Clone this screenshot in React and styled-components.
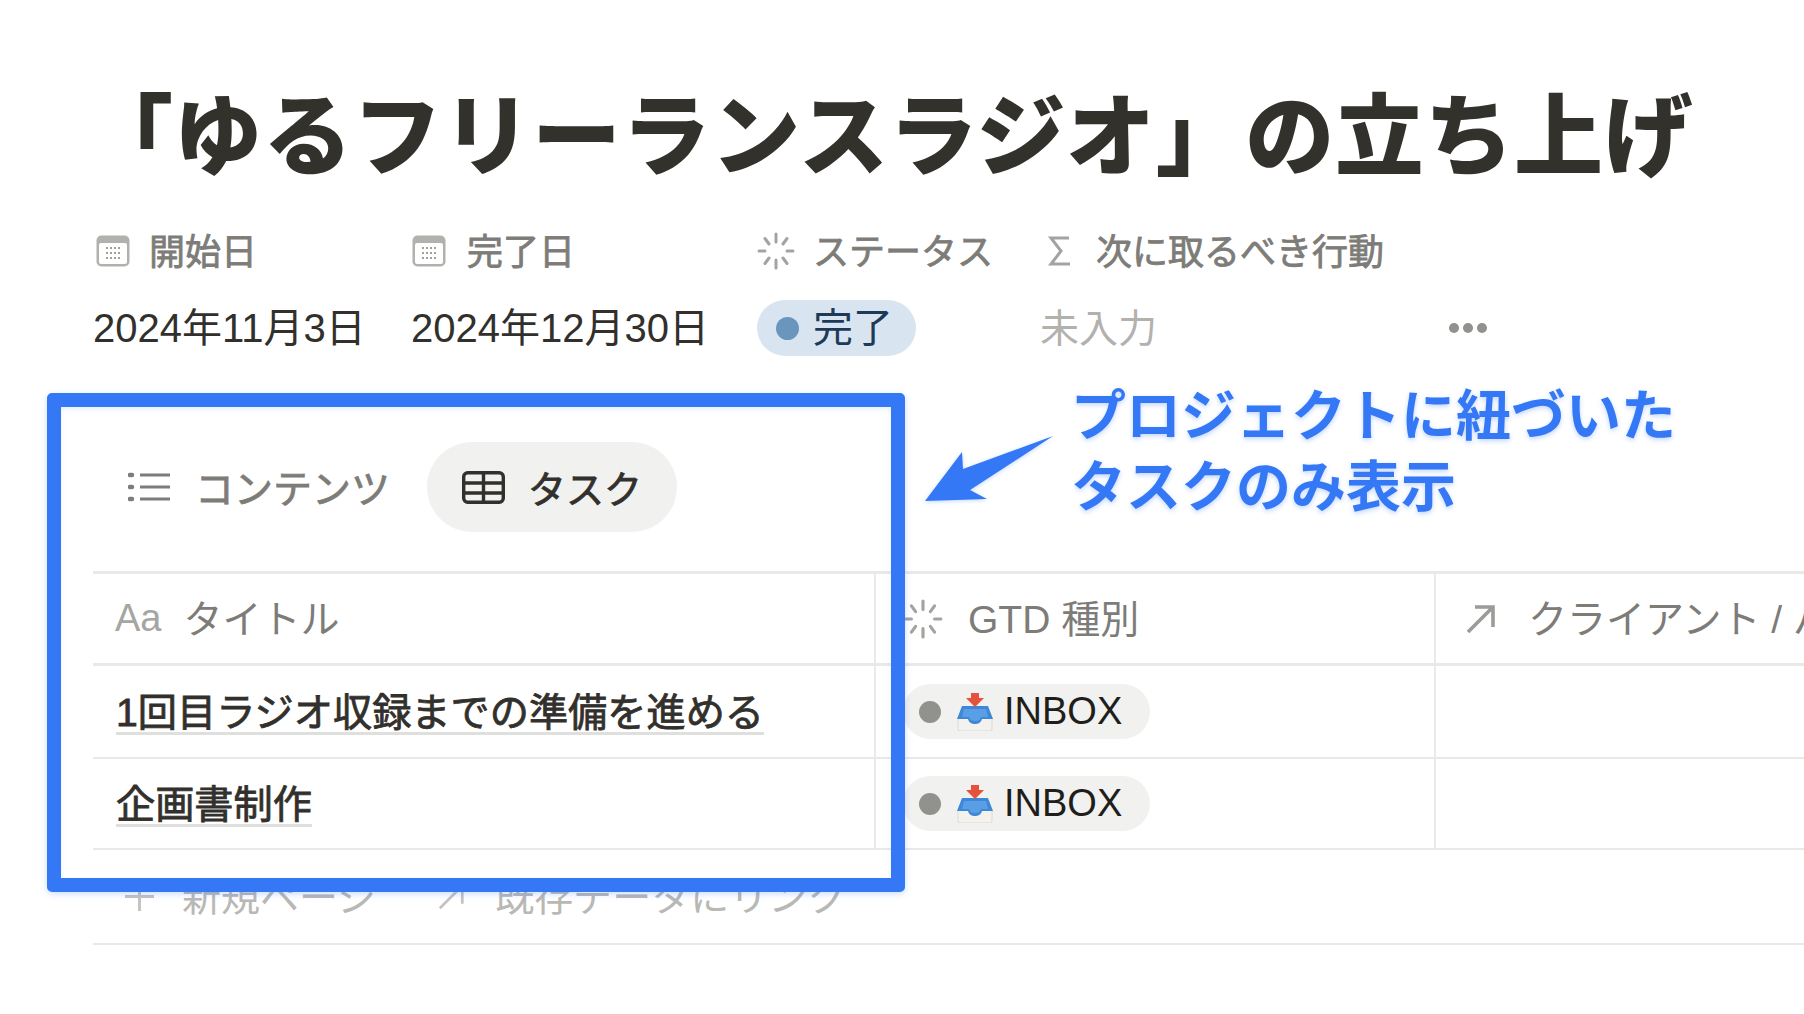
import React from 'react';
import styled, { createGlobalStyle } from 'styled-components';

const GlobalStyle = createGlobalStyle`
  html, body {
    margin: 0;
    padding: 0;
    background: #fff;
  }
  body {
    font-family: "Liberation Sans", "Noto Sans CJK JP", sans-serif;
    color: #37352f;
  }
`;

const Page = styled.div`
  position: relative;
  width: 1804px;
  height: 1014px;
  overflow: hidden;
  box-sizing: border-box;
  padding: 78px 0 0 93px;
`;

const Title = styled.h1`
  margin: 0 0 0 -9px;
  height: 118px;
  font-size: 89px;
  letter-spacing: 0.6px;
  line-height: 118px;
  font-weight: 900;
  white-space: nowrap;
  color: #33312c;
`;

const Props = styled.div`
  display: grid;
  grid-template-columns: 318px 346px 283px 1fr;
  grid-auto-rows: 76px;
  margin-top: 18px;
  align-items: center;
`;

const PropLabel = styled.div`
  display: flex;
  align-items: center;
  gap: ${(p) => p.$gap || 21}px;
  font-size: 36px;
  color: #7d7c78;
  -webkit-text-stroke: 0.8px #7d7c78;
  white-space: nowrap;
  margin-top: -2px;
  svg {
    flex: none;
    margin-left: ${(p) => p.$indent || 0}px;
  }
  span {
    padding-bottom: 5px;
  }
`;

const PropValue = styled.div`
  font-size: ${(p) => (p.$empty ? 39 : 40)}px;
  color: ${(p) => (p.$empty ? '#b2b1ae' : '#32302c')};
  white-space: nowrap;
  display: flex;
  align-items: center;
  justify-content: space-between;
`;

const ValueText = styled.span`
  padding-bottom: 7px;
`;

const More = styled.span`
  display: flex;
  gap: 4px;
  margin-right: 317px;
  i {
    width: 10px;
    height: 10px;
    border-radius: 50%;
    background: #91918e;
  }
`;

const StatusPill = styled.span`
  display: inline-flex;
  align-items: center;
  gap: 14px;
  height: 56px;
  padding: 0 23px 0 19px;
  border-radius: 28px;
  background: #d8e5f0;
  color: #1d3a58;
  font-size: 40px;
  width: max-content;
  box-sizing: border-box;
`;

const StatusDot = styled.i`
  width: 23px;
  height: 23px;
  border-radius: 50%;
  background: #6a96bd;
`;

const Tabs = styled.div`
  display: flex;
  align-items: center;
  height: 90px;
  margin-top: 76px;
  gap: 37px;
  padding-left: 35px;
`;

const Tab = styled.div`
  display: flex;
  align-items: center;
  gap: ${(p) => (p.$active ? 23 : 25)}px;
  height: 90px;
  font-size: ${(p) => (p.$active ? 38 : 39)}px;
  color: ${(p) => (p.$active ? '#32302c' : '#7d7c78')};
  -webkit-text-stroke: 0.8px ${(p) => (p.$active ? '#32302c' : '#7d7c78')};
  background: ${(p) => (p.$active ? '#f1f1f0' : 'transparent')};
  border-radius: 45px;
  padding: ${(p) => (p.$active ? '0 35px' : '0')};
  span {
    padding-bottom: 2px;
  }
`;

const Table = styled.div`
  margin-top: 39px;
  border-top: 3px solid #e9e9e7;
  width: 1800px;
`;

const Row = styled.div`
  display: grid;
  grid-template-columns: 783px 560px 1fr;
  height: ${(p) => p.$h}px;
  border-bottom: ${(p) => p.$bw || 2}px solid #e9e9e7;
  box-sizing: border-box;
`;

const Cell = styled.div`
  display: flex;
  align-items: center;
  overflow: hidden;
  white-space: nowrap;
  box-sizing: border-box;
  border-right: 2px solid #eaeae8;
  padding-left: ${(p) => p.$pl || 0}px;
  gap: ${(p) => p.$gap || 0}px;
  &:last-child {
    border-right: 0;
  }
  svg {
    flex: none;
  }
`;

const HeadText = styled.span`
  font-size: 39px;
  color: #7d7c78;
  padding-bottom: 6px;
`;

const AaMark = styled.span`
  font-size: 38px;
  color: #a5a5a2;
`;

const PageLink = styled.span`
  font-size: 39.2px;
  color: #32302c;
  -webkit-text-stroke: 0.8px #32302c;
  border-bottom: 3px solid #dfdfdd;
  line-height: 38px;
  padding-top: 6px;
`;

const TagPill = styled.span`
  display: flex;
  align-items: center;
  height: 55px;
  padding: 0 28px 0 16px;
  margin-left: 27px;
  border-radius: 28px;
  background: #f1f1ef;
  color: #1f1e1b;
  font-size: 38px;
`;

const TagDot = styled.i`
  width: 22px;
  height: 22px;
  border-radius: 50%;
  background: #91918e;
  margin-right: 15px;
`;

const Footer = styled.div`
  display: flex;
  align-items: center;
  height: 95px;
  padding: 0 0 0 31px;
  border-bottom: 2px solid #e9e9e7;
  box-sizing: border-box;
  width: 1711px;
  color: #b9b8b5;
  font-size: 39px;
`;

const FooterItem = styled.span`
  display: flex;
  align-items: center;
  gap: ${(p) => p.$gap}px;
  margin-right: 62px;
  span {
    padding-bottom: 6px;
  }
`;

const Highlight = styled.div`
  position: absolute;
  left: 47px;
  top: 393px;
  width: 858px;
  height: 499px;
  box-sizing: border-box;
  border: 14px solid #3478f6;
  border-radius: 5px;
  box-shadow: 0 2px 6px rgba(52, 120, 246, 0.25), inset 0 2px 5px rgba(52, 120, 246, 0.12);
  pointer-events: none;
`;

const Callout = styled.div`
  position: absolute;
  left: 1071px;
  top: 381px;
  font-size: 55px;
  line-height: 71px;
  font-weight: 700;
  color: #3478f6;
  text-shadow: 0 2px 5px rgba(52, 120, 246, 0.3);
  white-space: nowrap;
`;

const CalloutArrow = styled.svg`
  position: absolute;
  left: 920px;
  top: 430px;
  filter: drop-shadow(0 1px 2px rgba(52, 120, 246, 0.3));
`;

const Spinner = ({ size = 38, color = '#a3a3a0' }) => (
  <svg width={size} height={size} viewBox="0 0 38 38" fill="none" stroke={color} strokeWidth="3" strokeLinecap="round">
    <path d="M19 2v8M19 28v8M2 19h6M30 19h6M8 6.500l4 5.500M26 26l4 5.500M30 6.500L26 12M12 26l-4 5.500" />
  </svg>
);

const CalendarIcon = () => (
  <svg width="34" height="32" viewBox="0 0 34 32">
    <rect x="0.500" y="0.500" width="33" height="31" rx="5" fill="#b1b1ae" />
    <rect x="3" y="8" width="28" height="21" rx="2" fill="#fff" />
    <g fill="#a0a09d">
      {[11, 15, 19, 23].map((x) => (
        <React.Fragment key={x}>
          <rect x={x - 1} y="12" width="2" height="2" />
          <rect x={x - 1} y="17" width="2" height="2" />
          <rect x={x - 1} y="22" width="2" height="2" />
        </React.Fragment>
      ))}
    </g>
  </svg>
);

const SigmaIcon = () => (
  <svg width="26" height="32" viewBox="0 0 26 32" fill="none" stroke="#a3a3a0" strokeWidth="3" strokeLinejoin="miter">
    <path d="M22 3H4l10 13L4 29h19" />
  </svg>
);

const ListIcon = () => (
  <svg width="42" height="30" viewBox="0 0 42 30" fill="none" stroke="#7d7c78" strokeWidth="3">
    <path d="M12 3h30M12 15h30M12 27h30" />
    <path d="M2 3h2M2 15h2M2 27h2" strokeWidth="4.500" strokeLinecap="round" />
  </svg>
);

const TableIcon = () => (
  <svg width="43" height="33" viewBox="0 0 43 33" fill="none" stroke="#32302c" strokeWidth="3.400">
    <rect x="1.700" y="1.700" width="39.600" height="29.600" rx="4" />
    <path d="M1.700 12h39.600M1.700 22h39.600M21.500 1.700v29.600" />
  </svg>
);

const ArrowIcon = ({ size = 30, color = '#9b9b98', width = 3.600 }) => (
  <svg width={size} height={size} viewBox="0 0 30 30" fill="none" stroke={color} strokeWidth={width}>
    <path d="M2 28L27 3M9 3h18v20" />
  </svg>
);

const PlusIcon = () => (
  <svg width="31" height="31" viewBox="0 0 31 31" fill="none" stroke="#c4c3c0" strokeWidth="3">
    <path d="M15.500 1v29M1 15.500h29" />
  </svg>
);

const InboxEmoji = () => (
  <svg width="38" height="38" viewBox="0 0 38 38" style={{ marginRight: 10 }}>
    <path d="M2 25h34v11a2 2 0 0 1-2 2H4a2 2 0 0 1-2-2z" fill="#f4f2ee" stroke="#dcd9d3" strokeWidth="1" />
    <path d="M6 13h26l5 13H26c-1 4-4 5-7 5s-6-1-7-5H1z" fill="#3f88d8" />
    <path d="M8 16h22l2 8H25c-1 3-3 4-6 4s-5-1-6-4H6z" fill="#5a9fe6" />
    <path d="M15 0h8v5h5l-9 9-9-9h5z" fill="#e5533d" />
  </svg>
);

const InboxTag = () => (
  <TagPill>
    <TagDot />
    <InboxEmoji />
    INBOX
  </TagPill>
);

const App = () => (
  <Page>
    <GlobalStyle />
    <Title>「ゆるフリーランスラジオ」の立ち上げ</Title>

    <Props>
      <PropLabel $indent={3} $gap={19}><CalendarIcon /><span>開始日</span></PropLabel>
      <PropLabel $indent={1}><CalendarIcon /><span>完了日</span></PropLabel>
      <PropLabel $gap={18}><Spinner /><span>ステータス</span></PropLabel>
      <PropLabel $gap={23} $indent={7}><SigmaIcon /><span>次に取るべき行動</span></PropLabel>
      <PropValue><ValueText>2024年11月3日</ValueText></PropValue>
      <PropValue><ValueText>2024年12月30日</ValueText></PropValue>
      <PropValue>
        <StatusPill><StatusDot /><ValueText>完了</ValueText></StatusPill>
      </PropValue>
      <PropValue $empty>
        <ValueText>未入力</ValueText>
        <More><i /><i /><i /></More>
      </PropValue>
    </Props>

    <Tabs>
      <Tab><ListIcon /><span>コンテンツ</span></Tab>
      <Tab $active><TableIcon /><span>タスク</span></Tab>
    </Tabs>

    <Table>
      <Row $h={92} $bw={3}>
        <Cell $pl={22} $gap={22}><AaMark>Aa</AaMark><HeadText>タイトル</HeadText></Cell>
        <Cell $pl={27} $gap={25}><Spinner size={40} /><HeadText>GTD 種別</HeadText></Cell>
        <Cell $pl={30} $gap={32}><ArrowIcon /><HeadText>クライアント / パートナー</HeadText></Cell>
      </Row>
      <Row $h={93}>
        <Cell $pl={23}><PageLink>1回目ラジオ収録までの準備を進める</PageLink></Cell>
        <Cell><InboxTag /></Cell>
        <Cell />
      </Row>
      <Row $h={91}>
        <Cell $pl={23}><PageLink>企画書制作</PageLink></Cell>
        <Cell><InboxTag /></Cell>
        <Cell />
      </Row>
    </Table>

    <Footer>
      <FooterItem $gap={27}><PlusIcon /><span>新規ページ</span></FooterItem>
      <FooterItem $gap={30}><ArrowIcon size={27} color="#c4c3c0" width={3} /><span>既存データにリンク</span></FooterItem>
    </Footer>

    <Highlight />
    <CalloutArrow width="140" height="80" viewBox="920 430 140 80">
      <polygon points="925,501 962,452 963,469 1053,436 970,490 987,499" fill="#3478f6" />
    </CalloutArrow>
    <Callout>
      プロジェクトに紐づいた
      <br />
      タスクのみ表示
    </Callout>
  </Page>
);

export default App;
